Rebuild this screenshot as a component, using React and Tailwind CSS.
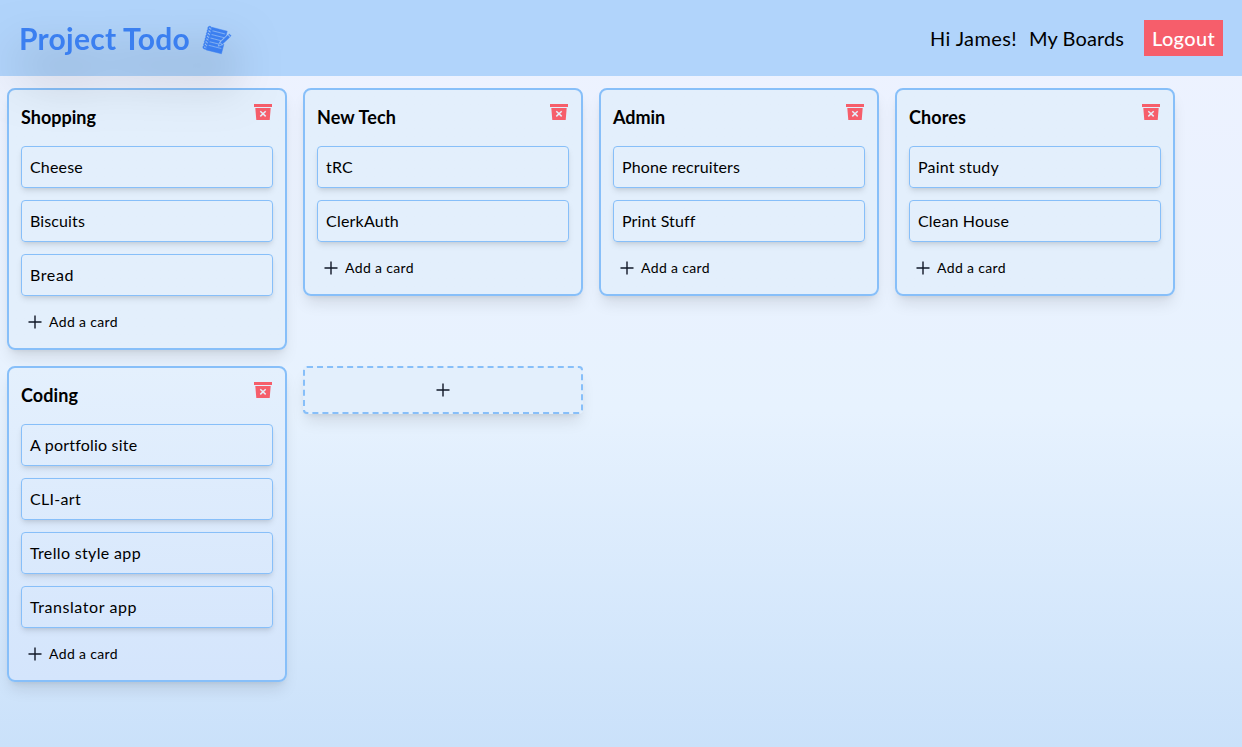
import { useLayoutEffect, useRef, useState } from "react";
import { GiNotebook } from "react-icons/gi";

const columns = [
  { name: "Shopping", w: 75, items: [["Cheese", 53], ["Biscuits", 55], ["Bread", 44]] },
  { name: "New Tech", w: 79, items: [["tRC", 27], ["ClerkAuth", 73]] },
  { name: "Admin", w: 52, items: [["Phone recruiters", 118], ["Print Stuff", 73]] },
  { name: "Chores", w: 57, items: [["Paint study", 81], ["Clean House", 91]] },
  {
    name: "Coding",
    w: 57,
    items: [["A portfolio site", 107], ["CLI-art", 51], ["Trello style app", 111], ["Translator app", 107]],
  },
];

// Text whose tracking is adjusted so that it fills the given width.
function Label({ children, w, className }) {
  const ref = useRef(null);
  const [tracking, setTracking] = useState(0);
  useLayoutEffect(() => {
    const natural = ref.current.getBoundingClientRect().width;
    setTracking((w - natural) / children.length);
  }, [w, children]);
  return (
    <span ref={ref} className={`whitespace-nowrap ${className}`} style={{ letterSpacing: tracking }}>
      {children}
    </span>
  );
}

function Plus() {
  return (
    <svg width="14" height="14" viewBox="0 0 14 14" stroke="#111827" strokeWidth="1.4">
      <path d="M7 .5v13M.5 7h13" />
    </svg>
  );
}

function ArchiveX() {
  return (
    <svg width="18" height="16" viewBox="0 0 18 16">
      <path fill="#f65e6b" d="M0 0h18v3H0zM1.3 4h15.4l-1 12H2.3z" />
      <path stroke="#e4effb" strokeWidth="1.5" d="M6.3 7.2l5.4 5.2M11.7 7.2l-5.4 5.2" />
    </svg>
  );
}

function Column({ name, w, items }) {
  return (
    <section className="w-[280px] self-start rounded-lg border-2 border-[#87bff9] bg-linear-to-b from-[#e3effc] to-[#e3effc] px-3 pt-3 shadow-lg last-of-type:from-[#e4f0fd] last-of-type:to-[#d4e5fc]">
      <div className="flex h-11 items-start justify-between pt-[2px]">
        <Label w={w} className="text-lg/[26px] font-bold">{name}</Label>
        <div className="pr-px"><ArchiveX /></div>
      </div>
      <div className="flex flex-col gap-3">
        {items.map(([text, width]) => (
          <div key={text} className="flex h-[42px] items-center rounded border border-[#87bff9] px-2 shadow-md">
            <Label w={width} className="text-base">{text}</Label>
          </div>
        ))}
      </div>
      <div className="flex h-[52px] items-center gap-[7px] pl-[7px]">
        <Plus />
        <Label w={69} className="text-sm">Add a card</Label>
      </div>
    </section>
  );
}

export default function App() {
  return (
    <div className="min-h-screen bg-linear-to-b from-[#eef2ff] from-0% via-[#e7f2fe] via-55% to-[#cae1fa] font-['Lato',sans-serif] text-black">
      <header className="flex h-[76px] items-center justify-between bg-[#b1d4fb] pr-[19px] pl-[19px]">
        <div className="flex items-center gap-[13px] text-[#3b7ff0] drop-shadow-[0_25px_25px_rgb(0_0_0/0.55)]">
          <Label w={171} className="text-[30px]/9 font-bold">Project Todo</Label>
          <GiNotebook className="mt-1 -ml-px size-[30px] stroke-current stroke-[8]" />
        </div>
        <nav className="flex items-center pb-px">
          <Label w={87} className="text-xl">Hi James!</Label>
          <Label w={95} className="ml-3 text-xl">My Boards</Label>
          <button className="-mb-px ml-5 flex h-9 w-[79px] items-center justify-center bg-[#f65e6b] text-white">
            <Label w={63} className="text-xl font-medium">Logout</Label>
          </button>
        </nav>
      </header>
      <main className="flex flex-wrap gap-4 pt-3 pl-[7px]">
        {columns.map((c) => <Column key={c.name} {...c} />)}
        <button className="flex h-12 w-[280px] items-center justify-center rounded border-2 border-dashed border-[#87bff9] bg-[#e3effc] shadow-lg">
          <Plus />
        </button>
      </main>
    </div>
  );
}
